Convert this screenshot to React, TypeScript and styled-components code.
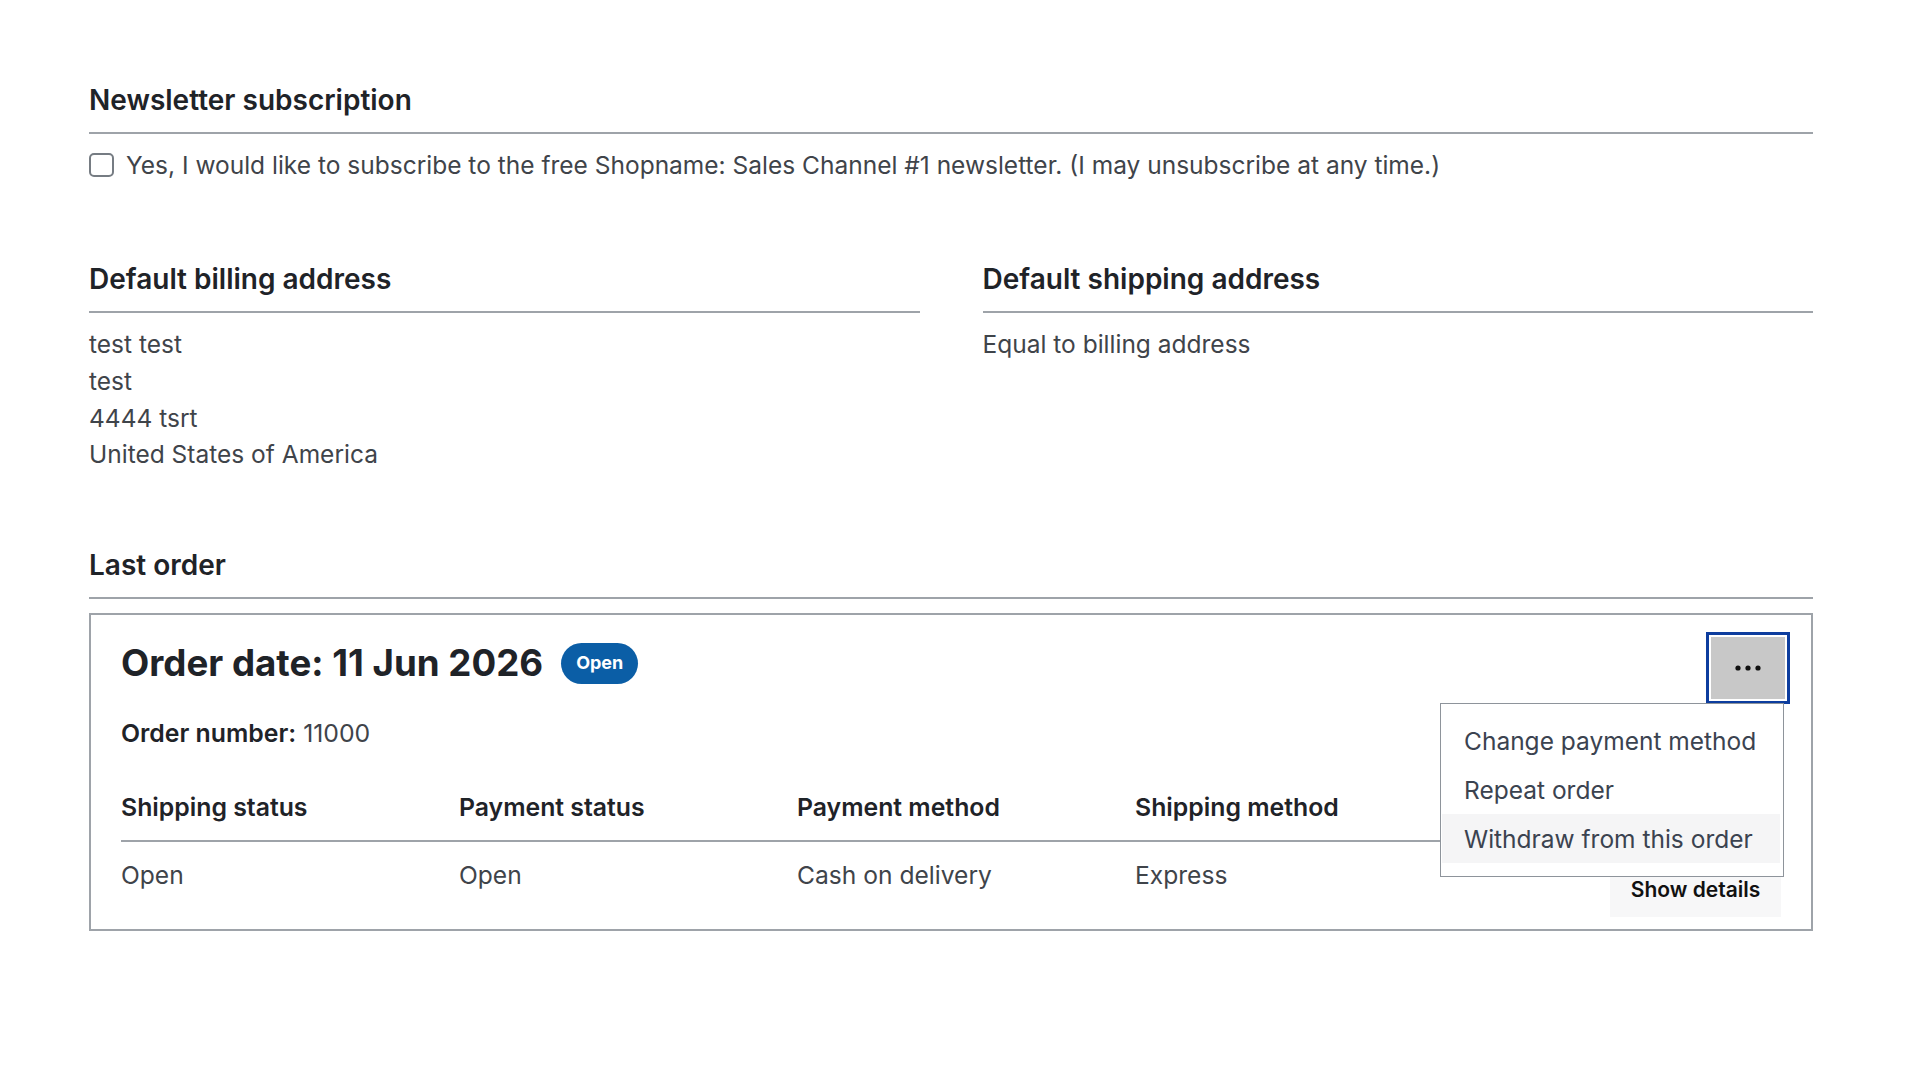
import styled, { createGlobalStyle } from 'styled-components';

const GlobalStyle = createGlobalStyle`
  * {
    box-sizing: border-box;
  }
  body {
    margin: 0;
    background: #ffffff;
    font-family: Inter, "Noto Sans", Arial, sans-serif;
    color: #3f444a;
  }
`;

const columns = [
  { title: 'Shipping status', value: 'Open' },
  { title: 'Payment status', value: 'Open' },
  { title: 'Payment method', value: 'Cash on delivery' },
  { title: 'Shipping method', value: 'Express' },
];

const menuItems = ['Change payment method', 'Repeat order', 'Withdraw from this order'];

export default function App() {
  return (
    <>
      <GlobalStyle />
      <StyledPage>
        {/* Newsletter */}
        <StyledSection>
          <StyledTitle>Newsletter subscription</StyledTitle>
          <StyledCheckLabel>
            <StyledCheckbox type="checkbox" />
            Yes, I would like to subscribe to the free Shopname: Sales Channel #1 newsletter. (I may unsubscribe at any time.)
          </StyledCheckLabel>
        </StyledSection>

        {/* Addresses */}
        <StyledAddressGrid>
          <div>
            <StyledTitle>Default billing address</StyledTitle>
            <StyledAddress>
              <p>test test</p>
              <p>test</p>
              <p>4444 tsrt</p>
              <p>United States of America</p>
            </StyledAddress>
          </div>
          <div>
            <StyledTitle>Default shipping address</StyledTitle>
            <StyledAddress>
              <p>Equal to billing address</p>
            </StyledAddress>
          </div>
        </StyledAddressGrid>

        {/* Last order */}
        <StyledSection>
          <StyledTitle>Last order</StyledTitle>
          <StyledCard>
            <StyledCardHead>
              <StyledOrderDate>
                Order date: 11 Jun 2026
                <StyledBadge>Open</StyledBadge>
              </StyledOrderDate>
              <StyledMenu>
                <StyledMenuButton type="button" aria-label="More actions">
                  <svg width="26" height="6" viewBox="0 0 26 6">
                    <circle cx="3" cy="3" r="2.6" fill="#111" />
                    <circle cx="13" cy="3" r="2.6" fill="#111" />
                    <circle cx="23" cy="3" r="2.6" fill="#111" />
                  </svg>
                </StyledMenuButton>
                <StyledDropdown>
                  {menuItems.map((item, i) => (
                    <StyledDropdownItem key={item} $active={i === menuItems.length - 1}>
                      {item}
                    </StyledDropdownItem>
                  ))}
                </StyledDropdown>
              </StyledMenu>
            </StyledCardHead>

            <StyledOrderNumber>
              <strong>Order number:</strong> 11000
            </StyledOrderNumber>

            <StyledTableHead>
              {columns.map((c) => (
                <span key={c.title}>{c.title}</span>
              ))}
              <span />
            </StyledTableHead>
            <StyledTableRow>
              {columns.map((c) => (
                <span key={c.title}>{c.value}</span>
              ))}
              <StyledDetailsButton type="button">Show details</StyledDetailsButton>
            </StyledTableRow>
          </StyledCard>
        </StyledSection>
      </StyledPage>
    </>
  );
}

const StyledPage = styled.main`
  width: 1831px;
  padding: 82px 18px 120px 89px;
  display: flex;
  flex-direction: column;
`;

const StyledSection = styled.section`
  margin-bottom: 78px;

  &:last-child {
    margin-bottom: 0;
  }
`;

const StyledTitle = styled.h2`
  margin: 0;
  padding-bottom: 14px;
  border-bottom: 2px solid #9ea3a9;
  font-size: 28px;
  line-height: 36px;
  font-weight: 600;
  color: #1f2328;
`;

const StyledCheckLabel = styled.label`
  display: flex;
  align-items: center;
  gap: 12px;
  margin-top: 13px;
  font-size: 24.5px;
  line-height: 36px;
  color: #3f444a;
`;

const StyledCheckbox = styled.input`
  appearance: none;
  margin: 0;
  width: 25px;
  height: 24px;
  border: 2px solid #767c83;
  border-radius: 5px;
  background: #fff;
`;

const StyledAddressGrid = styled.div`
  display: grid;
  grid-template-columns: 1fr 1fr;
  column-gap: 63px;
  margin-bottom: 74px;
`;

const StyledAddress = styled.div`
  margin-top: 13px;
  font-size: 24.5px;
  line-height: 36.8px;
  color: #3f444a;

  p {
    margin: 0;
  }
`;

const StyledCard = styled.div`
  position: relative;
  margin-top: 14px;
  padding: 26px 30px 12px 30px;
  border: 2px solid #9ea3a9;
`;

const StyledCardHead = styled.div`
  display: flex;
  justify-content: space-between;
  align-items: flex-start;
  height: 44px;
`;

const StyledOrderDate = styled.h3`
  display: flex;
  align-items: center;
  gap: 18px;
  margin: 0;
  font-size: 36.7px;
  line-height: 44px;
  font-weight: 700;
  color: #1f2328;
`;

const StyledBadge = styled.span`
  display: inline-flex;
  align-items: center;
  height: 41px;
  padding: 0 15px;
  border-radius: 21px;
  background: #0b5ea6;
  color: #fff;
  font-size: 18px;
  font-weight: 700;
`;

const StyledMenu = styled.div`
  position: relative;
  margin: -4px -4px 0 0;
`;

const StyledMenuButton = styled.button`
  display: flex;
  align-items: center;
  justify-content: center;
  width: 74px;
  height: 62px;
  border: none;
  background: #c8c8c8;
  outline: 3px solid #0d3d9e;
  outline-offset: 2px;
  cursor: pointer;
`;

const StyledDropdown = styled.ul`
  position: absolute;
  top: calc(100% + 4px);
  right: 1px;
  z-index: 2;
  width: 344px;
  margin: 0;
  padding: 12px 3px 13px 1px;
  list-style: none;
  background: #fff;
  border: 1.5px solid #8e949b;
`;

const StyledDropdownItem = styled.li<{ $active?: boolean }>`
  height: 49px;
  padding: 0 22px;
  display: flex;
  align-items: center;
  font-size: 24.5px;
  color: #3b4350;
  white-space: nowrap;
  background: ${(p) => (p.$active ? '#f5f5f6' : 'transparent')};
`;

const StyledOrderNumber = styled.p`
  margin: 30px 0 0;
  font-size: 24.8px;
  line-height: 36px;
  color: #3f444a;

  strong {
    font-weight: 600;
    color: #1f2328;
  }
`;

const StyledTableHead = styled.div`
  display: grid;
  grid-template-columns: repeat(4, 338px) 1fr;
  margin-top: 38px;
  padding-bottom: 15px;
  border-bottom: 2px solid #9ea3a9;
  font-size: 24.8px;
  line-height: 36px;
  font-weight: 600;
  color: #1f2328;
`;

const StyledTableRow = styled.div`
  display: grid;
  grid-template-columns: repeat(4, 338px) 1fr;
  align-items: start;
  margin-top: 15px;
  font-size: 24.6px;
  line-height: 36px;
  color: #3f444a;
`;

const StyledDetailsButton = styled.button`
  justify-self: end;
  margin-top: 5px;
  width: 171px;
  height: 55px;
  border: none;
  background: #f7f7f8;
  font-family: inherit;
  font-size: 21px;
  font-weight: 600;
  color: #111;
  cursor: pointer;
`;
